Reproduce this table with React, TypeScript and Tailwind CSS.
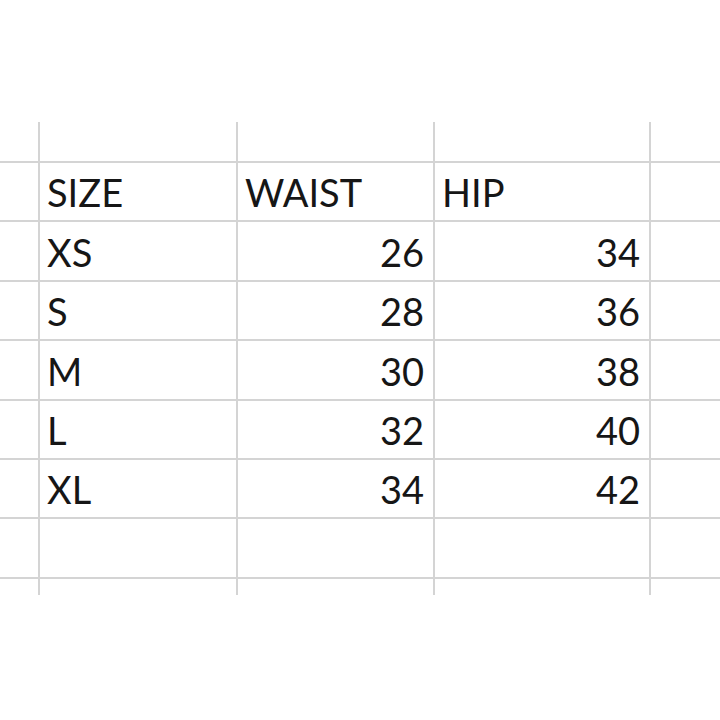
import React from 'react';

type Row = { size: string; waist: number | null; hip: number | null };

const rows: Row[] = [
  { size: 'XS', waist: 26, hip: 34 },
  { size: 'S', waist: 28, hip: 36 },
  { size: 'M', waist: 30, hip: 38 },
  { size: 'L', waist: 32, hip: 40 },
  { size: 'XL', waist: 34, hip: 42 },
];

const Cell: React.FC<{ children?: React.ReactNode; right?: boolean }> = ({ children, right }) => (
  <div
    className={`bg-white flex items-end pb-[6px] text-[38px] leading-[44px] text-[#161616] ${
      right ? 'justify-end pr-[9px]' : 'justify-start pl-[7px]'
    }`}
  >
    {children}
  </div>
);

const Blank: React.FC = () => <div className="bg-white" />;

export default function App() {
  return (
    <div className="w-[720px] h-[720px] bg-white overflow-hidden" style={{ fontFamily: 'Lato, "Open Sans", sans-serif' }}>
      <div className="pt-[122px]">
        <div className="grid grid-cols-[38px_196px_195px_214px_1fr] grid-rows-[39px_repeat(7,57.4px)_16px] gap-[2px] bg-[#d4d4d4]">
          {/* top partial row */}
          <Blank />
          <Blank />
          <Blank />
          <Blank />
          <Blank />

          {/* header */}
          <Blank />
          <Cell>SIZE</Cell>
          <Cell>WAIST</Cell>
          <Cell>HIP</Cell>
          <Blank />

          {rows.map((row) => (
            <React.Fragment key={row.size}>
              <Blank />
              <Cell>{row.size}</Cell>
              <Cell right>{row.waist}</Cell>
              <Cell right>{row.hip}</Cell>
              <Blank />
            </React.Fragment>
          ))}

          {/* empty rows */}
          {Array.from({ length: 10 }).map((_, i) => (
            <Blank key={i} />
          ))}
        </div>
      </div>
    </div>
  );
}
